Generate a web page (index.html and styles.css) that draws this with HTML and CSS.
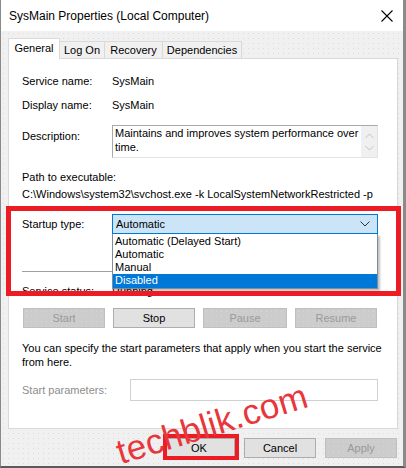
FILE: index.html
```html
<!DOCTYPE html>
<html>
<head>
    <title>SysMain Properties (Local Computer)</title>
    <link rel="stylesheet" href="styles.css">
</head>
<body>
    <div class="window">
        <div class="titlebar">
            <span class="title">SysMain Properties (Local Computer)</span>
            <svg class="close" width="12" height="12" viewBox="0 0 12 12">
                <path d="M0.5 0.5 L11.5 11.5 M11.5 0.5 L0.5 11.5" stroke="#000" stroke-width="1.1" fill="none"/>
            </svg>
        </div>

        <div class="body">
            <div class="tabs">
                <div class="tab active">General</div>
                <div class="tab">Log On</div>
                <div class="tab">Recovery</div>
                <div class="tab">Dependencies</div>
            </div>

            <div class="panel">
                <div class="row r-service">
                    <span class="label">Service name:</span>
                    <span>SysMain</span>
                </div>
                <div class="row r-display">
                    <span class="label">Display name:</span>
                    <span>SysMain</span>
                </div>
                <div class="row r-desc">
                    <span class="label label-top">Description:</span>
                    <div class="desc-box">
                        <div class="desc-text">Maintains and improves system performance over time.</div>
                        <div class="scroll">
                            <svg width="9" height="6" viewBox="0 0 9 6"><path d="M0.5 5 L4.5 1 L8.5 5" stroke="#c2c2c2" fill="none"/></svg>
                            <svg width="9" height="6" viewBox="0 0 9 6"><path d="M0.5 1 L4.5 5 L8.5 1" stroke="#c2c2c2" fill="none"/></svg>
                        </div>
                    </div>
                </div>
                <div class="line r-pathlabel">Path to executable:</div>
                <div class="line r-path">C:\Windows\system32\svchost.exe -k LocalSystemNetworkRestricted -p</div>

                <div class="row r-startup">
                    <span class="label">Startup type:</span>
                    <div class="combo-wrap">
                        <div class="combo">
                            <span>Automatic</span>
                            <svg width="10" height="6" viewBox="0 0 10 6"><path d="M0.5 0.5 L5 5 L9.5 0.5" stroke="#333" fill="none"/></svg>
                        </div>
                        <div class="dropdown">
                            <div class="opt">Automatic (Delayed Start)</div>
                            <div class="opt">Automatic</div>
                            <div class="opt">Manual</div>
                            <div class="opt selected">Disabled</div>
                        </div>
                    </div>
                </div>

                <div class="separator"></div>

                <div class="row r-status">
                    <span class="label">Service status:</span>
                    <span>Running</span>
                </div>

                <div class="controls">
                    <div class="btn disabled">Start</div>
                    <div class="btn">Stop</div>
                    <div class="btn disabled">Pause</div>
                    <div class="btn disabled">Resume</div>
                </div>

                <div class="hint">You can specify the start parameters that apply when you start the service from here.</div>

                <div class="row r-params">
                    <span class="label label-params">Start parameters:</span>
                    <div class="input"></div>
                </div>

                <div class="highlight"></div>
            </div>

            <div class="footer">
                <div class="btn fbtn ok">OK<div class="ok-mark"></div></div>
                <div class="btn fbtn">Cancel</div>
                <div class="btn fbtn disabled">Apply</div>
            </div>

            <div class="watermark">techblik.com</div>
        </div>
    </div>
</body>
</html>
```

FILE: styles.css
```css
* {
    margin: 0;
    padding: 0;
    box-sizing: border-box;
}

body {
    font-family: 'Liberation Sans', Arial, sans-serif;
    font-size: 11px;
    color: #000;
    background: #6d6d6d;
    width: 406px;
    height: 468px;
    overflow: hidden;
}

.window {
    width: 406px;
    height: 468px;
    border-left: 1px solid #8a8a8a;
    border-right: 3px solid #8a8a8a;
    border-bottom: 2px solid #5a5a5a;
    background: #f0f0f0;
    display: flex;
    flex-direction: column;
}

.titlebar {
    height: 31px;
    background: #fff;
    display: flex;
    align-items: center;
    justify-content: space-between;
    padding: 0 8px 0 8px;
    font-size: 12px;
}

.close {
    margin-right: 2px;
}

/* dialog body with the faint dotted texture */
.body {
    flex: 1;
    position: relative;
    padding: 7px 5px 0 7px;
    background-color: #f0f0f0;
    background-image: radial-gradient(circle, #dcdcdc 0.7px, transparent 0.9px);
    background-size: 5px 5px;
}

.tabs {
    display: flex;
    align-items: flex-end;
    height: 20px;
}

.tab {
    height: 17px;
    border: 1px solid #d9d9d9;
    border-bottom: none;
    margin-left: -1px;
    background: #f0f0f0;
    line-height: 17px;
    text-align: center;
    white-space: nowrap;
}

.tab:nth-child(2) { width: 46px; }
.tab:nth-child(3) { width: 59px; }
.tab:nth-child(4) { width: 80px; }

.tab.active {
    width: 52px;
    margin-left: 0;
    height: 21px;
    background: #fff;
    position: relative;
    z-index: 1;
    margin-bottom: -1px;
    padding-top: 1px;
}

.panel {
    position: relative;
    width: 390px;
    height: 371px;
    background: #fff;
    border: 1px solid #d9d9d9;
    padding: 14px 0 0 13px;
}

.row {
    display: flex;
    align-items: center;
}

.label {
    width: 90px;
    flex-shrink: 0;
}

.line, .row {
    line-height: 16px;
    white-space: nowrap;
}

.r-service { height: 16px; }
.r-display { height: 16px; margin-top: 8px; }

.r-desc {
    margin-top: 12px;
    align-items: flex-start;
}

.label-top {
    padding-top: 3px;
}

.desc-box {
    width: 266px;
    height: 33px;
    border: 1px solid #a9a9a9;
    border-right-color: #e3e3e3;
    border-bottom-color: #e3e3e3;
    display: flex;
    white-space: normal;
}

.desc-text {
    flex: 1;
    padding: 0 0 0 2px;
    line-height: 14px;
}

.scroll {
    width: 16px;
    background: #f0f0f0;
    display: flex;
    flex-direction: column;
    align-items: center;
    justify-content: space-between;
    padding: 7px 0 6px;
}

.r-pathlabel { margin-top: 11px; }
.r-path { margin-top: 1px; }

.r-startup {
    margin-top: 12px;
    height: 20px;
}

.combo-wrap {
    position: relative;
}

.combo {
    width: 266px;
    height: 20px;
    background: #cce4f7;
    border: 1px solid #0078d7;
    display: flex;
    align-items: center;
    justify-content: space-between;
    padding: 0 7px 0 3px;
}

/* open list lies over the status row */
.dropdown {
    position: absolute;
    left: 0;
    top: 20px;
    width: 266px;
    background: #fff;
    border: 1px solid #7a8ea0;
    border-top: none;
    padding-top: 1px;
    box-shadow: 2px 2px 2px rgba(0, 0, 0, 0.25);
    z-index: 2;
}

.opt {
    height: 13px;
    line-height: 13px;
    padding-left: 2px;
}

.opt.selected {
    height: 14px;
    background: #0078d7;
    color: #fff;
}

.separator {
    width: 356px;
    height: 1px;
    background: #a0a0a0;
    margin-top: 37px;
}

.r-status {
    margin-top: 11px;
    height: 16px;
}

.controls {
    display: grid;
    grid-template-columns: 82px 82px 84px 82px;
    column-gap: 8px;
    margin-top: 9px;
    margin-left: 1px;
}

.btn {
    height: 20px;
    background: #e1e1e1;
    border: 1px solid #adadad;
    text-align: center;
    line-height: 18px;
}

.btn.disabled {
    background-color: #cccccc;
    background-image: radial-gradient(circle, #d8d8d8 0.7px, transparent 0.9px);
    background-size: 5px 5px;
    border-color: #bfbfbf;
    color: #9a9a9a;
}

.hint {
    margin-top: 13px;
    width: 360px;
    line-height: 14px;
}

.r-params {
    margin-top: 10px;
}

.label-params {
    width: 108px;
    color: #8d8d8d;
}

.input {
    width: 248px;
    height: 22px;
    border: 1px solid #d0d0d0;
}

.highlight {
    position: absolute;
    left: -3px;
    top: 147px;
    width: 395px;
    height: 90px;
    border: 5px solid #ed1c24;
    z-index: 3;
}

.footer {
    display: flex;
    gap: 9px;
    margin-top: 9px;
    padding-left: 155px;
}

.fbtn {
    width: 72px;
}

.ok {
    position: relative;
}

.ok-mark {
    position: absolute;
    left: -1px;
    top: -5px;
    width: 76px;
    height: 26px;
    border: 4px solid #ed1c24;
}

.watermark {
    position: absolute;
    left: 122px;
    top: 401px;
    font-family: 'Liberation Sans', Arial, sans-serif;
    font-size: 35px;
    color: #e8363b;
    transform: rotate(-17deg);
    transform-origin: left bottom;
    white-space: nowrap;
    letter-spacing: 0.3px;
}
```
